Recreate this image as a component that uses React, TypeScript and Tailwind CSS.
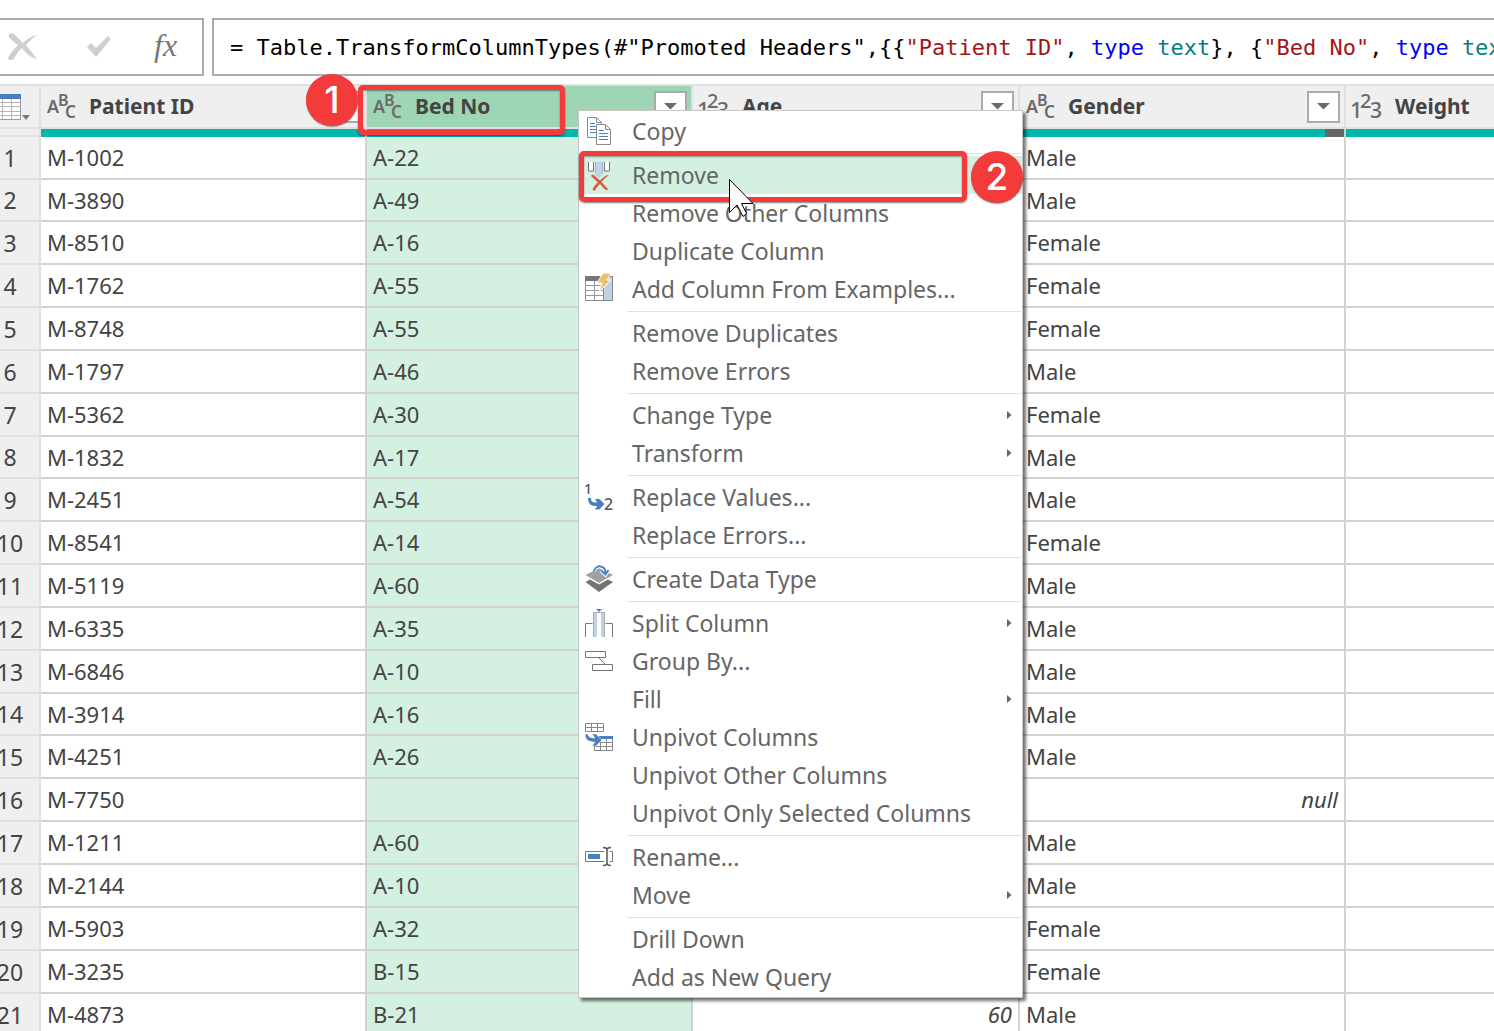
import React from "react";

type Row = { id: string; bed: string; age?: string; gender: string | null };

const rows: Row[] = [
  { id: "M-1002", bed: "A-22", gender: "Male" },
  { id: "M-3890", bed: "A-49", gender: "Male" },
  { id: "M-8510", bed: "A-16", gender: "Female" },
  { id: "M-1762", bed: "A-55", gender: "Female" },
  { id: "M-8748", bed: "A-55", gender: "Female" },
  { id: "M-1797", bed: "A-46", gender: "Male" },
  { id: "M-5362", bed: "A-30", gender: "Female" },
  { id: "M-1832", bed: "A-17", gender: "Male" },
  { id: "M-2451", bed: "A-54", gender: "Male" },
  { id: "M-8541", bed: "A-14", gender: "Female" },
  { id: "M-5119", bed: "A-60", gender: "Male" },
  { id: "M-6335", bed: "A-35", gender: "Male" },
  { id: "M-6846", bed: "A-10", gender: "Male" },
  { id: "M-3914", bed: "A-16", gender: "Male" },
  { id: "M-4251", bed: "A-26", gender: "Male" },
  { id: "M-7750", bed: "", gender: null },
  { id: "M-1211", bed: "A-60", gender: "Male" },
  { id: "M-2144", bed: "A-10", gender: "Male" },
  { id: "M-5903", bed: "A-32", gender: "Female" },
  { id: "M-3235", bed: "B-15", gender: "Female" },
  { id: "M-4873", bed: "B-21", age: "60", gender: "Male" },
];

function AbcIcon() {
  return (
    <svg width="30" height="28" viewBox="0 0 30 28" className="shrink-0 overflow-visible fill-[#6a6a6a] font-['Noto_Sans',sans-serif] font-semibold" aria-hidden="true">
      <text x="0" y="20" fontSize="18">A</text>
      <text x="11" y="13" fontSize="16">B</text>
      <text x="18" y="25" fontSize="17">C</text>
    </svg>
  );
}

function NumIcon() {
  return (
    <svg width="32" height="28" viewBox="0 0 32 28" className="shrink-0 overflow-visible fill-[#6a6a6a] font-['Noto_Sans',sans-serif] font-medium" aria-hidden="true">
      <text x="-2" y="25" fontSize="22">1</text>
      <text x="8" y="15" fontSize="20">2</text>
      <text x="18" y="25" fontSize="21">3</text>
    </svg>
  );
}

function FilterButton({ label }: { label: string }) {
  return (
    <button aria-label={label} className="flex h-8 w-[33px] shrink-0 items-center justify-center border-2 border-[#ababab] bg-white">
      <svg width="13" height="7" viewBox="0 0 13 7" aria-hidden="true">
        <path d="M0 0h13L6.500 6.500z" fill="#6a6a6a" />
      </svg>
    </button>
  );
}

function HeaderCell({ name, kind, selected = false, last = false }: { name: string; kind: "abc" | "num"; selected?: boolean; last?: boolean }) {
  return (
    <th
      scope="col"
      className={
        "h-[45px] border-y-2 border-[#e0e0e0] p-0 text-left text-[21px] font-bold text-[#444] " +
        (selected ? "bg-[#9ed5b5] " : "bg-[#efefef] ") +
        (last ? "" : "border-r-2")
      }
    >
      <div className="flex h-[41px] items-center pl-[6px] pr-1">
        {kind === "abc" ? <AbcIcon /> : <NumIcon />}
        <span className={kind === "abc" ? "ml-3 flex-1" : "ml-[11px] flex-1"}>{name}</span>
        {!last && <FilterButton label={"Filter " + name} />}
      </div>
    </th>
  );
}

function QualityCell({ empty = false, last = false }: { empty?: boolean; last?: boolean }) {
  return (
    <td className={"h-2 border-[#d0d0d0] p-0 " + (last ? "" : "border-r-2")}>
      <div className="flex h-2">
        <div className="flex-1 bg-[#01b8aa]" />
        {empty && <div className="w-[19px] bg-[#666]" />}
      </div>
    </td>
  );
}

const cell = "border-b-2 border-r-2 border-[#d2d2d2] px-[6px] py-0 ";

function CopyIcon() {
  return (
    <g fill="#fff" stroke="#8a8a8a">
      <path d="M2.500.5h9l5 5v15h-14z" />
      <path d="M11.500.5v5h5" fill="none" />
      <path d="M5 6.500h5M5 9.500h6M5 12.500h6M5 15.500h6" stroke="#4a80bd" />
      <path d="M11.500 7.500h9l5 5v15h-14z" />
      <path d="M20.500 7.500v5h5" fill="none" />
      <path d="M14 13.500h5M14 16.500h9M14 19.500h9M14 22.500h9" stroke="#4a80bd" />
    </g>
  );
}

function RemoveIcon() {
  return (
    <g>
      <path d="M3.500 1v9h5V1M19.500 1v9h5V1" fill="#fff" />
      <path d="M3.500 1v9h5.500M24.500 1v9H19M8.500 1v9M19.500 1v9" fill="none" stroke="#777" />
      <path d="M10 1h8v12l-4 4-4-4z" fill="#bfd2ea" />
      <path d="M10.500 1v11M17.500 1v11" stroke="#a9b5c4" fill="none" />
      <path d="M6 15c1-2 3-1 4 0l5 4.500c3-3 5-4.500 8-5.500l.5.5c-3 2-5 4-7 6.500l6.500 7-1 1.500c-3-1.500-5-4-7-6.500-2 2-3.500 4-5 6.500-1 .5-2 0-2.500-1 1-3 3-5 5.500-7z" fill="#d65f3e" />
    </g>
  );
}

function ExamplesIcon() {
  return (
    <g>
      <path d="M.5 1.500h27v24H.5z" fill="#fff" stroke="#888" />
      <path d="M0 1h18v5H0z" fill="#777" />
      <path d="M0 10.500h18M0 15.500h18M0 20.500h18M9.500 6v19" stroke="#999" fill="none" />
      <path d="M18.500 1.500h9v24h-9z" fill="#bfd2ea" stroke="#888" />
      <path d="M18-2h8l-4 7h4L14 17l3-9h-5z" fill="#eec071" stroke="#fff" />
    </g>
  );
}

function ReplaceIcon() {
  return (
    <g>
      <g className="fill-[#555] font-['Noto_Sans',sans-serif] font-medium">
        <text x="-1" y="11" fontSize="14">1</text>
        <text x="19" y="27" fontSize="16">2</text>
      </g>
      <path d="M3 15h3c0 4 2 4.500 6 4.500L10 16h4.500l5 5-5 5.500H10l2-3.500C6 23.500 3 21 3 15z" fill="#4a80bd" />
    </g>
  );
}

function DataTypeIcon() {
  return (
    <g>
      <path d="M.5 17L5 14.500l9 5 9-5 5 2.500-14 10z" fill="#737373" />
      <path d="M.5 10L14 3l14 7-14 8z" fill="#a0a0a0" />
      <path d="M9 6c2-7 12-6 11.500 2.500M16 5.500l4.500 4 3-4.500" fill="none" stroke="#fff" strokeWidth="4" />
      <path d="M9 6c2-7 12-6 11.500 2.500M16 5.500l4.500 4 3-4.500" fill="none" stroke="#4a80bd" strokeWidth="2" />
    </g>
  );
}

function SplitIcon() {
  return (
    <g fill="none" stroke="#777">
      <path d="M.5 28V14.500h7M20.500 14.500h7V28" />
      <path d="M8 3h12v25H8z" fill="#bfd2ea" stroke="none" />
      <path d="M12 4h4v24h-4z" fill="#fff" stroke="none" />
      <path d="M8.500 28V3.500h11V28" stroke="#aaa" />
      <path d="M11 0h6l-3 3z" fill="#4a80bd" stroke="none" />
    </g>
  );
}

function GroupIcon() {
  return <path d="M.5 4.500h20v6H.5zM7.500 17.500h20v6h-20zM13.500 10.500l7 7" fill="none" stroke="#777" />;
}

function UnpivotIcon() {
  return (
    <g fill="none" stroke="#888">
      <path d="M.5.5h18v8H.5zM.5 4.500h18M6.500.5v8M12.500.5v8" />
      <path d="M9.500 14.500h18v13h-18zM9.500 19.500h18M9.500 23.500h18M15.500 14v13M21.500 14v13" />
      <path d="M14 13h14v3H14z" fill="#4a80bd" stroke="none" />
      <path d="M0 11h3c0 3 3 4 7 4l-3-4h4l6 6-6 6H7l3-4c-6 0-10-2-10-8z" fill="#4a80bd" stroke="#fff" strokeWidth=".5" />
    </g>
  );
}

function RenameIcon() {
  return (
    <g fill="none" stroke="#777">
      <path d="M.5 8.500h27v10H.5z" />
      <path d="M3 11h12v5H3z" fill="#4a80bd" stroke="none" />
      <path d="M19.500 7h5v13h-5z" fill="#fff" stroke="none" />
      <path d="M22 6v15M18 4.500c2 0 4 .5 4 2.500 0-2 2-2.500 4-2.500M18 22.500c2 0 4-.5 4-2.500 0 2 2 2.500 4 2.500" stroke="#555" strokeWidth="1.500" />
    </g>
  );
}

type Item = { label: string; icon?: () => React.JSX.Element; sub?: boolean; active?: boolean };

const menu: Item[][] = [
  [{ label: "Copy", icon: CopyIcon }],
  [
    { label: "Remove", icon: RemoveIcon, active: true },
    { label: "Remove Other Columns" },
    { label: "Duplicate Column" },
    { label: "Add Column From Examples...", icon: ExamplesIcon },
  ],
  [{ label: "Remove Duplicates" }, { label: "Remove Errors" }],
  [
    { label: "Change Type", sub: true },
    { label: "Transform", sub: true },
  ],
  [{ label: "Replace Values...", icon: ReplaceIcon }, { label: "Replace Errors..." }],
  [{ label: "Create Data Type", icon: DataTypeIcon }],
  [
    { label: "Split Column", icon: SplitIcon, sub: true },
    { label: "Group By...", icon: GroupIcon },
    { label: "Fill", sub: true },
    { label: "Unpivot Columns", icon: UnpivotIcon },
    { label: "Unpivot Other Columns" },
    { label: "Unpivot Only Selected Columns" },
  ],
  [
    { label: "Rename...", icon: RenameIcon },
    { label: "Move", sub: true },
  ],
  [{ label: "Drill Down" }, { label: "Add as New Query" }],
];

function ContextMenu() {
  return (
    <div role="menu" className="absolute left-[578px] top-[110px] w-[445px] border border-[#c6c6c6] bg-white py-px shadow-[3px_3px_3px_rgba(0,0,0,0.55)]">
      {menu.map((group, g) => (
        <div key={g} role="group">
          {g > 0 && <div role="separator" className="ml-12 mr-px mt-[3px] mb-[2px] h-px bg-[#e1e1e1]" />}
          {group.map(({ label, icon: Icon, sub, active }) => (
            <button
              key={label}
              role="menuitem"
              className={"flex h-[38px] w-full items-center pl-[6px] pr-[10px] text-left text-[23px] text-[#666] " + (active ? "bg-[#d3f0e0]" : "")}
            >
              <svg width="28" height="28" viewBox="0 0 28 28" className="shrink-0 overflow-visible" aria-hidden="true">
                {Icon && <Icon />}
              </svg>
              <span className="ml-[19px] flex-1 whitespace-nowrap">{label}</span>
              {sub && (
                <svg width="5" height="8" viewBox="0 0 5 8" aria-hidden="true">
                  <path d="M0 0l4.500 4L0 8z" fill="#666" />
                </svg>
              )}
            </button>
          ))}
        </div>
      ))}
    </div>
  );
}

const marker = "absolute flex size-[52px] items-center justify-center rounded-full bg-[#f33b3b] font-['Inter',sans-serif] text-[37px] font-medium text-white shadow-[0_1px_1px_rgba(0,0,0,0.4)] ";
const frame = "pointer-events-none absolute rounded-[5px] border-[5px] border-[#f33b3b] shadow-[0_1px_2px_rgba(0,0,0,0.5),inset_0_1px_2px_rgba(0,0,0,0.4)] ";

export default function App() {
  return (
    <main className="relative h-screen overflow-hidden bg-white font-['Noto_Sans',sans-serif]">
      <div className="flex gap-2 pt-[18px] pb-2">
        <div className="flex h-[58px] w-[204px] shrink-0 items-center border-y-2 border-r-2 border-[#ababab]">
          <button aria-label="Cancel" className="ml-[7px]">
            <svg width="32" height="28" viewBox="0 0 32 28" aria-hidden="true">
              <path d="M2 1c3-2 6 0 8 3l6 6c4-4 8-7 14-8-4 3-8 6-11 10l11 14c-7-2-11-6-15-11-4 3-6 7-8 11-3 2-6 1-6-1 2-5 6-9 10-13C7 9 0 4 2 1z" fill="#cfcfcf" />
            </svg>
          </button>
          <button aria-label="Confirm" className="ml-12">
            <svg width="26" height="24" viewBox="0 0 26 24" aria-hidden="true">
              <path d="M0 12l4-4 5 5L21 1l3 3-15 18z" fill="#cfcfcf" />
            </svg>
          </button>
          <button aria-label="Insert function" className="ml-[41px] pb-1 font-['Liberation_Serif',serif] text-[32px] leading-none text-[#777] italic">
            fx
          </button>
        </div>
        <div
          role="textbox"
          aria-label="Formula"
          contentEditable
          suppressContentEditableWarning
          className="h-[58px] min-w-0 flex-1 overflow-hidden border-y-2 border-l-2 border-[#ababab] pl-4 font-['DejaVu_Sans_Mono',monospace] text-[22px] leading-[56px] whitespace-pre text-black"
        >
          {'= Table.TransformColumnTypes(#"Promoted Headers",{{'}
          <span className="text-[#a31515]">"Patient ID"</span>
          {", "}
          <span className="text-[#0000ff]">type</span> <span className="text-[#008080]">text</span>
          {"}, {"}
          <span className="text-[#a31515]">"Bed No"</span>
          {", "}
          <span className="text-[#0000ff]">type</span> <span className="text-[#008080]">text</span>
        </div>
      </div>

      <table className="w-full table-fixed border-separate border-spacing-0 text-[22px] text-[#444]">
        <colgroup>
          <col className="w-[41px]" />
          <col className="w-[326px]" />
          <col className="w-[326px]" />
          <col className="w-[327px]" />
          <col className="w-[326px]" />
          <col />
        </colgroup>
        <thead>
          <tr>
            <th className="border-y-2 border-r-2 border-[#e0e0e0] bg-[#efefef] p-0">
              <button aria-label="Table options" className="block">
                <svg width="32" height="28" viewBox="0 0 32 28" aria-hidden="true">
                  <path d="M-8 2.500h28.500v24H-8z" fill="#fff" stroke="#999" />
                  <path d="M0 9.500h20M0 13.500h20M0 18.500h20M0 22.500h20M2.500 6v20M11.500 6v20" stroke="#b5b5b5" fill="none" />
                  <path d="M0 1h21v5H0z" fill="#4a7ebb" />
                  <path d="M22 22h8l-4 5z" fill="#777" />
                </svg>
              </button>
            </th>
            <HeaderCell name="Patient ID" kind="abc" />
            <HeaderCell name="Bed No" kind="abc" selected />
            <HeaderCell name="Age" kind="num" />
            <HeaderCell name="Gender" kind="abc" />
            <HeaderCell name="Weight" kind="num" last />
          </tr>
          <tr>
            <td className="h-2 border-b-2 border-r-2 border-[#e0e0e0] bg-[#efefef] p-0" />
            <QualityCell />
            <QualityCell empty />
            <QualityCell />
            <QualityCell empty />
            <QualityCell last />
          </tr>
        </thead>
        <tbody>
          {rows.map((r, i) => (
            <tr key={r.id} className={i % 6 === 1 && i < 19 ? "h-[42px]" : "h-[43px]"}>
              <th scope="row" className="border-b-2 border-r-2 border-[#e0e0e0] bg-[#efefef] p-0 text-[23px] leading-[38px] font-normal">
                <span className="flex w-5 justify-center">{i + 1}</span>
              </th>
              <td className={cell}>{r.id}</td>
              <td className={cell + "bg-[#d3f0e0]"}>{r.bed}</td>
              <td className={cell + "text-right italic"}>{r.age}</td>
              <td className={cell + (r.gender === null ? "text-right italic" : "")}>{r.gender ?? "null"}</td>
              <td className="border-b-2 border-[#d2d2d2] p-0" />
            </tr>
          ))}
        </tbody>
      </table>

      <ContextMenu />

      <div className={frame + "left-[358px] top-[85px] h-[50px] w-[207px]"} />
      <div className={marker + "left-[306px] top-[74px]"}>1</div>
      <div className={frame + "left-[579px] top-[151px] h-[51px] w-[388px]"} />
      <div className={marker + "left-[971px] top-[151px]"}>2</div>

      <svg className="pointer-events-none absolute left-[729px] top-[179px]" width="28" height="40" viewBox="0 0 28 40" aria-hidden="true">
        <path d="M.5.5v33l7.500-7.500 6 11.500 3.500-3-5-10h11.500z" fill="#fff" stroke="#000" />
      </svg>
    </main>
  );
}
